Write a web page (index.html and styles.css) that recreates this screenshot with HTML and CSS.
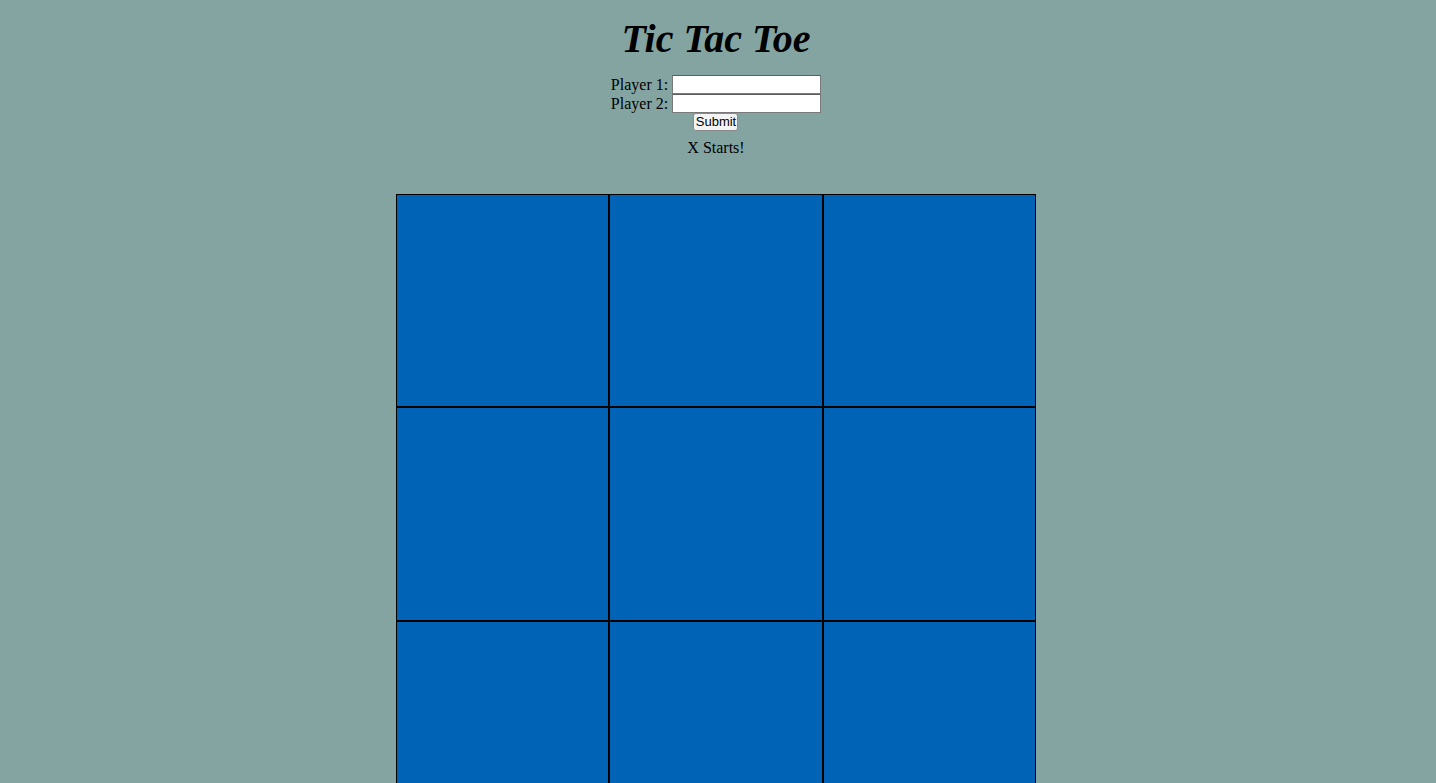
FILE: index.html
```html
<!DOCTYPE html>
<html>
<head>
<meta charset="utf-8">
<title>Tic Tac Toe</title>
<link rel="stylesheet" href="styles.css">
</head>
<body>
<div class="page">
  <h1 class="title">Tic Tac Toe</h1>
  <form class="players">
    <div class="row"><label>Player 1:</label><input type="text" class="name"></div>
    <div class="row"><label>Player 2:</label><input type="text" class="name"></div>
    <div class="row btn-row"><button type="button" class="submit">Submit</button></div>
  </form>
  <div class="status">X Starts!</div>
  <div class="board">
    <div class="cell"></div><div class="cell"></div><div class="cell"></div>
    <div class="cell"></div><div class="cell"></div><div class="cell"></div>
    <div class="cell"></div><div class="cell"></div><div class="cell"></div>
  </div>
</div>
</body>
</html>
```
FILE: styles.css
```css
html, body {
  margin: 0;
  padding: 0;
  height: 100%;
  overflow: hidden;
}
body {
  background: #84a4a2;
  font-family: "Liberation Serif", "Times New Roman", serif;
  font-size: 16px;
  color: #000;
}
.page {
  display: flex;
  flex-direction: column;
  align-items: center;
  padding-right: 4px;
}
.title {
  margin: 16px 0 0 0;
  height: 59px;
  line-height: 46px;
  font-size: 40px;
  font-weight: bold;
  font-style: italic;
}
.players {
  display: flex;
  flex-direction: column;
  align-items: center;
  margin: 0;
}
.row {
  display: flex;
  align-items: center;
  height: 19px;
}
.row label {
  margin-right: 4px;
}
.name {
  box-sizing: border-box;
  width: 149px;
  height: 19px;
  margin: 0;
  padding: 1px 2px;
  border: 1px solid #7a7a7a;
  border-top-color: #5e5e5e;
  background: #fff;
}
.btn-row {
  height: 18px;
}
.submit {
  box-sizing: border-box;
  height: 18px;
  width: 45px;
  padding: 0;
  margin: 0;
  font-family: "Liberation Sans", Arial, sans-serif;
  font-size: 13px;
  line-height: 16px;
  background: #f4f4f4;
  border: 1px solid #8a8a8a;
  border-radius: 3px;
  color: #000;
}
.status {
  margin-top: 8px;
  line-height: 18px;
  height: 18px;
}
.board {
  margin-top: 37px;
  width: 640px;
  display: grid;
  grid-template-columns: repeat(3, 1fr);
  grid-auto-rows: 213.33px;
}
.cell {
  background: #0063b6;
  border: 1px solid #000;
}
```
